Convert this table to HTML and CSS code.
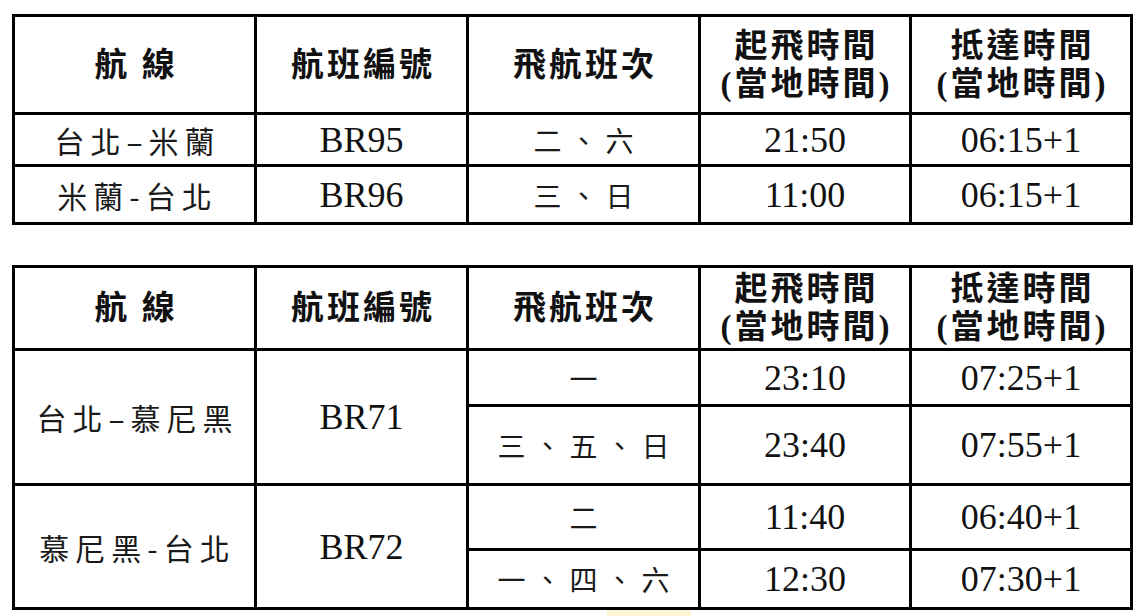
FILE: index.html
```html
<!DOCTYPE html>
<html lang="zh-Hant">
<head>
<meta charset="utf-8">
<title>航班資訊</title>
<link rel="stylesheet" href="styles.css">
</head>
<body>
<div class="page">
  <table class="flights t1">
    <colgroup><col class="c1"><col class="c2"><col class="c3"><col class="c4"><col class="c5"></colgroup>
    <tr class="head h1">
      <th><span class="th">航 線</span></th>
      <th><span class="th">航班編號</span></th>
      <th><span class="th">飛航班次</span></th>
      <th><span class="th">起飛時間</span><br><span class="th">(當地時間)</span></th>
      <th><span class="th">抵達時間</span><br><span class="th">(當地時間)</span></th>
    </tr>
    <tr class="r1a">
      <td><span class="route">台北–米蘭</span></td>
      <td class="num">BR95</td>
      <td><span class="days">二、六</span></td>
      <td class="num">21:50</td>
      <td class="num">06:15+1</td>
    </tr>
    <tr class="r1b">
      <td><span class="route">米蘭-台北</span></td>
      <td class="num">BR96</td>
      <td><span class="days">三、日</span></td>
      <td class="num">11:00</td>
      <td class="num">06:15+1</td>
    </tr>
  </table>

  <table class="flights t2">
    <colgroup><col class="c1"><col class="c2"><col class="c3"><col class="c4"><col class="c5"></colgroup>
    <tr class="head h2">
      <th><span class="th">航 線</span></th>
      <th><span class="th">航班編號</span></th>
      <th><span class="th">飛航班次</span></th>
      <th><span class="th">起飛時間</span><br><span class="th">(當地時間)</span></th>
      <th><span class="th">抵達時間</span><br><span class="th">(當地時間)</span></th>
    </tr>
    <tr class="r2a">
      <td rowspan="2"><span class="route">台北–慕尼黑</span></td>
      <td rowspan="2" class="num">BR71</td>
      <td><span class="days">一</span></td>
      <td class="num">23:10</td>
      <td class="num">07:25+1</td>
    </tr>
    <tr class="r2b">
      <td><span class="days">三、五、日</span></td>
      <td class="num">23:40</td>
      <td class="num">07:55+1</td>
    </tr>
    <tr class="r2c">
      <td rowspan="2"><span class="route">慕尼黑-台北</span></td>
      <td rowspan="2" class="num">BR72</td>
      <td><span class="days">二</span></td>
      <td class="num">11:40</td>
      <td class="num">06:40+1</td>
    </tr>
    <tr class="r2d">
      <td><span class="days">一、四、六</span></td>
      <td class="num">12:30</td>
      <td class="num">07:30+1</td>
    </tr>
  </table>
  <div class="mark"></div>
</div>
</body>
</html>
```

FILE: styles.css
```css
html, body {
  margin: 0;
  padding: 0;
  background: #ffffff;
}

body {
  font-family: "Liberation Serif", "Noto Sans CJK TC", serif;
  color: #111111;
}

.page {
  padding: 14px 0 0 12px;
}

.flights {
  border-collapse: collapse;
  table-layout: fixed;
  width: 1118px;
}

.t2 {
  margin-top: 40px;
}

.c1 { width: 242px; }
.c2 { width: 212px; }
.c3 { width: 232px; }
.c4 { width: 211px; }
.c5 { width: 221px; }

.flights th,
.flights td {
  border: 3px solid #000000;
  padding: 0;
  text-align: center;
  vertical-align: middle;
}

.flights th {
  font-family: "Liberation Serif", "Noto Sans CJK TC", serif;
  font-weight: 700;
  font-size: 33px;
  line-height: 38px;
}

.th {
  letter-spacing: 3px;
  margin-right: -3px;
}

.h1 { height: 98px; }
.h2 { height: 83px; }

.r1a { height: 52px; }
.r1b { height: 58px; }

.r2a { height: 56px; }
.r2b { height: 79px; }
.r2c { height: 65px; }
.r2d { height: 59px; }

.num {
  font-family: "Liberation Serif", serif;
  font-size: 36px;
  line-height: 40px;
}

.route {
  font-family: "Noto Sans CJK TC", sans-serif;
  font-size: 30px;
  line-height: 40px;
  letter-spacing: 6px;
  margin-right: -6px;
  color: #1a1a1a;
}

.days {
  font-family: "Noto Sans CJK TC", sans-serif;
  font-size: 28px;
  line-height: 40px;
  letter-spacing: 8px;
  margin-right: -8px;
  color: #1a1a1a;
}

.mark {
  width: 84px;
  height: 8px;
  margin: 0 0 0 595px;
  background: #fbf5d6;
}
```
